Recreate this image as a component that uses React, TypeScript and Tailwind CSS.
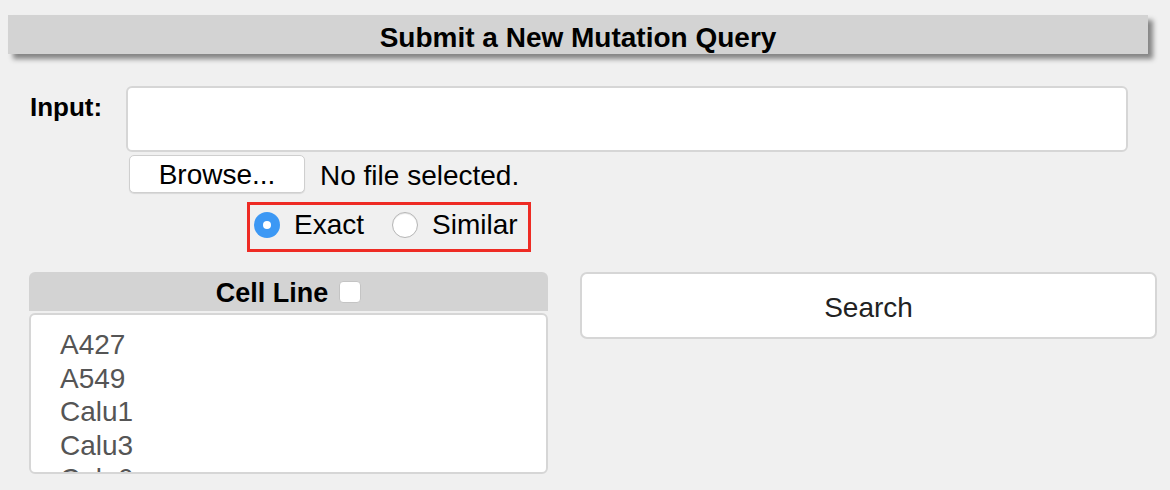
export default function App() {
  const cells = ["A427", "A549", "Calu1", "Calu3", "Calu6"];
  return (
    <div
      className="w-[1170px] h-[490px] overflow-hidden bg-[#f0f0f0] text-black"
      style={{ fontFamily: '"Liberation Sans", Arial, sans-serif' }}
    >
      {/* Title bar */}
      <div className="pt-[15px] pl-[8px] pr-[22px]">
        <div className="h-[39px] bg-[#d3d3d3] shadow-[5px_5px_5px_rgba(0,0,0,0.45)] flex items-center justify-center">
          <h1 className="text-[28px] leading-[32px] font-bold pt-[6px]">Submit a New Mutation Query</h1>
        </div>
      </div>

      {/* Input */}
      <div className="flex mt-[32px]">
        <div className="w-[126px] pl-[30px] pt-[6px] text-[26px] leading-[30px] font-bold">Input:</div>
        <div className="flex flex-col">
          <textarea className="w-[1002px] h-[66px] bg-white border-2 border-[#d6d6d6] rounded-[6px] resize-none outline-none" />
          <div className="flex items-center mt-[3px] ml-[3px]">
            <button className="w-[176px] h-[38px] bg-white border border-[#cfcfcf] rounded-[5px] text-[28px] leading-[32px] pt-[2px] shadow-[0_1px_1px_rgba(0,0,0,0.1)]">
              Browse...
            </button>
            <span className="ml-[15px] text-[28px] leading-[32px] pt-[4px]">No file selected.</span>
          </div>
          <div className="ml-[121px] mt-[9px] w-[284px] h-[50px] border-[3px] border-[#ee2b24] flex items-center pl-[4px] pb-[4px]">
            <span className="w-[26px] h-[26px] rounded-full bg-[#3c98f4] flex items-center justify-center">
              <span className="w-[8px] h-[8px] rounded-full bg-white" />
            </span>
            <span className="ml-[14px] text-[28px] leading-[32px]">Exact</span>
            <span className="ml-[28px] w-[26px] h-[26px] rounded-full bg-white border border-[#b5b5b5] shadow-[inset_0_1px_1px_rgba(0,0,0,0.1)]" />
            <span className="ml-[14px] text-[28px] leading-[32px]">Similar</span>
          </div>
        </div>
      </div>

      {/* Cell line + Search */}
      <div className="flex mt-[20px] pl-[29px] gap-[32px]">
        <div className="w-[519px] flex flex-col">
          <div className="h-[39px] bg-[#d3d3d3] rounded-t-[6px] flex items-center justify-center gap-[11px]">
            <span className="text-[27px] leading-[32px] font-bold pt-[2px]">Cell Line</span>
            <span className="w-[22px] h-[22px] bg-white rounded-[4px] border border-[#c4c4c4]" />
          </div>
          <div className="mt-[2px] h-[161px] bg-white border-2 border-[#d6d6d6] rounded-[6px] overflow-hidden pl-[29px] pt-[13px]">
            {cells.map((c) => (
              <div key={c} className="text-[28px] leading-[33.5px] text-[#555]">
                {c}
              </div>
            ))}
          </div>
        </div>
        <div>
          <button className="w-[577px] h-[67px] bg-white border-2 border-[#d6d6d6] rounded-[7px] text-[28px] leading-[32px] pt-[4px] text-[#222]">
            Search
          </button>
        </div>
      </div>
    </div>
  );
}
